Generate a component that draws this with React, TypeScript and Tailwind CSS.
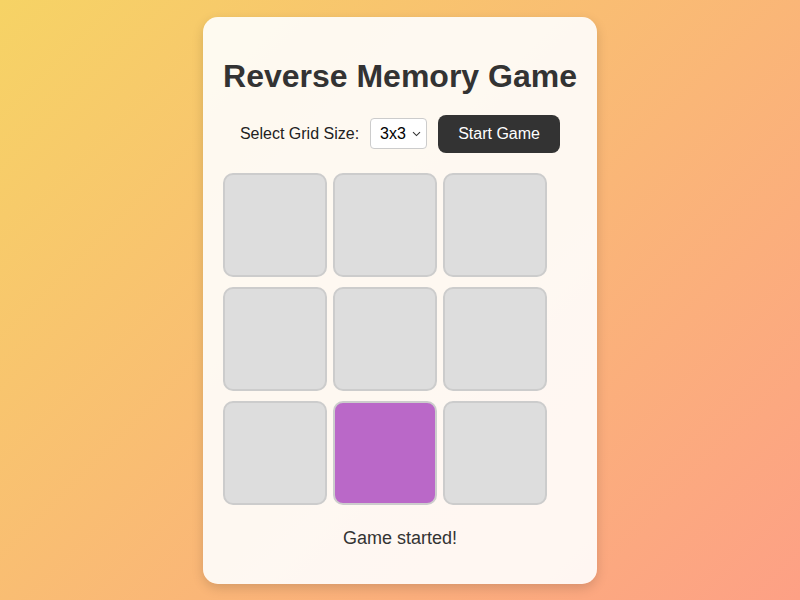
import React from "react";

const CELLS = Array.from({ length: 9 }, (_, i) => i);
const ACTIVE = 7;

export default function App() {
  return (
    <div
      className="w-full h-[600px] flex items-center justify-center bg-[linear-gradient(135deg,#f6d365_0%,#fda085_100%)]"
      style={{ fontFamily: '"Liberation Sans", Arial, Helvetica, sans-serif' }}
    >
      <div className="w-[394px] h-[567px] bg-white/90 rounded-[15px] shadow-[0_4px_12px_rgba(0,0,0,0.15)] px-5 pt-[41px] flex flex-col">
        <h1 className="text-[32px] leading-[37px] font-bold text-[#333] text-center whitespace-nowrap">
          Reverse Memory Game
        </h1>

        <div className="mt-[20px] h-[38px] flex items-center justify-center">
          <span className="text-[16px] text-[#222] mr-[11px]">Select Grid Size:</span>
          <div className="w-[57px] h-[31px] bg-white border border-[#ccc] rounded-[4px] flex items-center pl-[9px] pr-[5px] text-[16px] text-black">
            <span>3x3</span>
            <svg className="ml-auto" width="9" height="6" viewBox="0 0 9 6">
              <path d="M1 1.2 L4.5 4.6 L8 1.2" fill="none" stroke="#333" strokeWidth="1.1" />
            </svg>
          </div>
          <button className="ml-[11px] h-[38px] w-[122px] bg-[#333] text-white text-[16px] rounded-[8px]">
            Start Game
          </button>
        </div>

        <div className="mt-[20px] grid grid-cols-[repeat(3,104px)] gap-x-[6px] gap-y-[10px]">
          {CELLS.map((i) => (
            <div
              key={i}
              className={
                i === ACTIVE
                  ? "w-[104px] h-[104px] rounded-[10px] border-2 border-[#ccc] bg-[#ba68c8]"
                  : "w-[104px] h-[104px] rounded-[10px] border-2 border-[#ccc] bg-[#ddd]"
              }
            />
          ))}
        </div>

        <p className="mt-[20px] text-[18px] text-[#333] text-center">Game started!</p>
      </div>
    </div>
  );
}
